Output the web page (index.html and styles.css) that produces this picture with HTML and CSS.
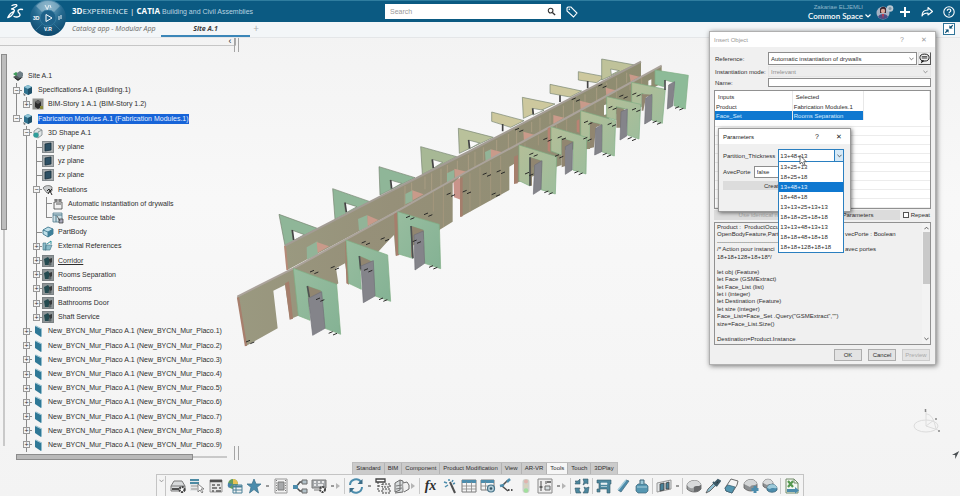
FILE: index.html
```html
<!DOCTYPE html>
<html lang="en">
<head>
<meta charset="utf-8">
<title>3DEXPERIENCE | CATIA</title>
<link rel="stylesheet" href="styles.css">
</head>
<body>
<svg class="defs" aria-hidden="true">
  <symbol id="i-site" viewBox="0 0 12 12"><path d="M1 7l5-3 5 3-5 4z" fill="#50575a"/><path d="M1 4l3-2 3 2-3 2z" fill="#3f9a5a"/><path d="M5 3l3-2 3 2v3L8 8 5 6z" fill="#6e7f87"/><path d="M3 8l3 2 3-2" stroke="#222" fill="none"/></symbol>
  <symbol id="i-prod" viewBox="0 0 12 12"><path d="M2 3l4-2 4 2v6l-4 2-4-2z" fill="#2f708c"/><path d="M2 3l4-2 4 2-4 2z" fill="#8fc3d6"/><path d="M6 5v6l4-2V3z" fill="#1f4f68"/><path d="M1 9l3 2-2 1z" fill="#6b7478"/></symbol>
  <symbol id="i-story" viewBox="0 0 12 12"><rect width="11" height="11" x=".5" y=".5" fill="#8e8f8c"/><path d="M3 4l3-2 3 2v5l-3 2-3-2z" fill="#2b2b2b"/><path d="M3 4l3-2 3 2-3 2z" fill="#5d5d5d"/><path d="M8 8h3v3H8z" fill="#8a8a3a"/></symbol>
  <symbol id="i-shape" viewBox="0 0 12 12"><path d="M2 4l4-3 4 2v5l-4 3-4-2z" fill="#dfe5e6" stroke="#7a8488" stroke-width=".8"/><path d="M6 5l4-2M6 5v5" stroke="#7a8488" stroke-width=".8"/><circle cx="4" cy="8" r="2.600" fill="#2f9d9a"/></symbol>
  <symbol id="i-plane" viewBox="0 0 12 12"><rect x=".5" y=".5" width="11" height="11" fill="#a9aeb0" stroke="#858b8e"/><path d="M3 3l6-1v7l-6 1z" fill="#2d5064" stroke="#17303e" stroke-width=".8"/></symbol>
  <symbol id="i-rel" viewBox="0 0 12 12"><path d="M1 4c2-3 7-3 9-1v4l-5 2z" fill="#c9cccd" stroke="#555" stroke-width=".7"/><path d="M5 7l2-2 1 2 2-2M6 10l2-3 2 4" stroke="#222" fill="none"/></symbol>
  <symbol id="i-act" viewBox="0 0 12 12"><path d="M2 4h8v7H2z" fill="#f1f1f1" stroke="#444" stroke-width=".8"/><path d="M2 2h8M4 1v3M8 1v3M4 6h5" stroke="#444" stroke-width=".9"/></symbol>
  <symbol id="i-res" viewBox="0 0 12 12"><path d="M1 1h9v9H1z" fill="#cfe0e6" stroke="#4e7a8c" stroke-width=".8"/><path d="M1 3h9M4 3v7" stroke="#4e7a8c"/><path d="M5 4l3 5M7 7h4v4H7z" fill="#aab" stroke="#333" stroke-width=".7"/></symbol>
  <symbol id="i-body" viewBox="0 0 12 12"><path d="M1 4l5-3 5 2v5l-5 3-5-3z" fill="#bfe0ea" stroke="#2d6b84" stroke-width=".8"/><path d="M1 4l5 2 5-3M6 6v5" stroke="#2d6b84" fill="none" stroke-width=".8"/><path d="M6 6l5-3v5l-5 3z" fill="#3d7f99"/></symbol>
  <symbol id="i-ext" viewBox="0 0 12 12"><path d="M1 3h3v7H1zM4 5h6l-2 5H3z" fill="#8bbcca" stroke="#4c7d8e" stroke-width=".7"/><path d="M5 4l4-3v3" fill="none" stroke="#2a8f9a"/></symbol>
  <symbol id="i-set" viewBox="0 0 12 12"><rect x=".5" y=".5" width="11" height="11" fill="#8f9698" stroke="#7b8184"/><path d="M2 4l4-2 2 3-1 5-4 0z" fill="#244a50"/><path d="M7 4l3-1v4l-2 2z" fill="#35383a"/><circle cx="8" cy="9" r="1.600" fill="#5c6466"/></symbol>
  <symbol id="i-panel" viewBox="0 0 12 12"><path d="M3 1l6 3v8L3 8z" fill="#2f7896"/><path d="M3 1l1-.6L10 3.500v8l-1 .5V4z" fill="#8fbccc"/></symbol>
</svg>

<header class="topbar">
  <svg class="logo" viewBox="0 0 18 18" aria-label="DS"><g fill="none" stroke="#fff" stroke-width="1.300" stroke-linecap="round" stroke-linejoin="round"><path d="M6 2.500c3-1.500 6-1 4.500.7C9.500 4.400 7 5.500 5.500 6c2.500 0 3.500.8 2.500 2.700C6.700 11.500 4 14 1.800 14.500 3 12 5 9.500 7.500 8.500"/><path d="M16.500 6.500c-2.500-.7-5 .3-4.500 2 .4 1.400 2.500 2 2 3.700-.5 1.600-3.500 2.300-6 1.300"/></g></svg>
  <button class="compass" aria-label="Compass">
    <svg viewBox="0 0 38 38"><defs><radialGradient id="cg" cx=".5" cy=".2" r=".9"><stop offset="0" stop-color="#7fb0ca"/><stop offset=".45" stop-color="#24698f"/><stop offset="1" stop-color="#073f63"/></radialGradient></defs><circle cx="19" cy="19" r="18" fill="url(#cg)"/><path d="M7 7a17 17 0 0 1 24 0l-6 6a9 9 0 0 0-12 0z" fill="#a5c6d6" opacity=".5"/><path d="M6 32l7-7M32 32l-7-7" stroke="#2c7297"/><circle cx="19" cy="19" r="8" fill="#1e628a" stroke="#3c83a6" stroke-width=".6"/><path d="M17 15.500l6 3.500-6 3.500z" fill="none" stroke="#fff"/><path d="M16 6l2 4M20 6l-2 5M21 6l1 3M30 17v4M32 16v4" stroke="#e4eef3" fill="none"/></svg>
    <span class="c-l">3D</span><span class="c-b">V.R</span>
  </button>
  <div class="brand"><b>3D</b>EXPERIENCE <i>|</i> <b>CATIA</b> <span>Building and Civil Assemblies</span></div>
  <form class="search"><input type="text" placeholder="Search" aria-label="Search"><button type="button" aria-label="Search"><svg viewBox="0 0 10 10"><circle cx="4" cy="4" r="2.600" fill="none" stroke="#333" stroke-width="1.200"/><path d="M6 6l3 3" stroke="#333" stroke-width="1.500"/></svg></button></form>
  <button class="tag" aria-label="Tags"><svg viewBox="0 0 12 12"><path d="M1 2l1-1h3l6 6-3.500 4L1 5z" fill="none" stroke="#fff" stroke-width="1.100"/><circle cx="3.300" cy="3.300" r=".8" fill="#fff"/></svg></button>
  <div class="account"><span>Zakariae ELJEMLI</span><button>Common Space <svg viewBox="0 0 6 4"><path d="M.5.5L3 3 5.500.5" fill="none" stroke="#fff" stroke-width="1.200"/></svg></button></div>
  <svg class="avatar" viewBox="0 0 18 16"><circle cx="7" cy="9" r="6.500" fill="#a6b3c4"/><path d="M4 5c1-3 6-3 6 0v4H4z" fill="#3a2630"/><circle cx="7" cy="7" r="2.200" fill="#d8a698"/><path d="M2 13c1-4 9-4 10 0-3 3-7 3-10 0z" fill="#4a4f86"/><path d="M6 10h2l-1 5z" fill="#c93b4e"/><circle cx="14" cy="4.500" r="3.300" fill="#b9c8d2"/><circle cx="14" cy="4.500" r="1.500" fill="#7e98a8"/></svg>
  <button class="hb" aria-label="Add"><svg viewBox="0 0 12 12"><path d="M6 1v10M1 6h10" stroke="#fff" stroke-width="2"/></svg></button>
  <button class="hb" aria-label="Share"><svg viewBox="0 0 12 12"><path d="M1 10c0-4 2-6 6-6V1.500L11.500 5.500 7 9V7C4 7 2 8 1 10z" fill="none" stroke="#fff" stroke-width="1.100" stroke-linejoin="round"/></svg></button>
  <button class="hb" aria-label="Help"><svg viewBox="0 0 12 12"><circle cx="6" cy="6" r="5.200" fill="none" stroke="#fff" stroke-width="1.100"/><path d="M4.300 4.700c0-2.300 3.500-2.200 3.500 0 0 1.200-1.800 1.200-1.800 2.600M6 8.300v1.200" fill="none" stroke="#fff" stroke-width="1.200"/></svg></button>
</header>

<nav class="tabs">
  <a href="#" class="tab">Catalog app - Modular App</a>
  <a href="#" class="tab on">Site A.1</a>
  <button aria-label="New tab">+</button>
</nav>

<main class="work">
  <svg class="scene" viewBox="0 0 1410 900" aria-label="Drywall assembly">
    <defs>
      <linearGradient id="wall" x1="0" x2="1"><stop offset="0" stop-color="#9a9980"/><stop offset=".3" stop-color="#969079"/><stop offset="1" stop-color="#8e8c70"/></linearGradient>
      <linearGradient id="gr" x1="0" x2="1" y2="1"><stop offset="0" stop-color="#98bd9f"/><stop offset="1" stop-color="#84b294"/></linearGradient>
      <linearGradient id="gl" x1="0" x2="1" y2="1"><stop offset="0" stop-color="#b4be98"/><stop offset="1" stop-color="#9dbd9c"/></linearGradient>
      <g id="mk" stroke="#2a2a28" stroke-width="3"><path d="M0 4l12-5M13 9l12-5"/></g>
    </defs>
    <g stroke="#75836f" stroke-width="2">
      <g fill="#8fb698"><path d="M147 493l115 42-97 52z"/><path d="M308 416l112 39-105 53z"/><path d="M447 350l108 33-105 52z"/></g>
      <path d="M572 290l108 30-103 53z" fill="#a7b895"/><path d="M685 235l105 27-102 48z" fill="#b9c19b"/>
      <g fill="#cdc89e"><path d="M785 186l97 26-40 20-57-18z"/><path d="M877 142l98 20-95 43z"/><path d="M960 103l95 20-35 18-60-11z"/><path d="M1045 65l80 15-25 18-55-8z"/><path d="M1115 27l100 18-100 45z" fill="#bfc29a"/></g>
      <g fill="#fafafa"><path d="M190 572l-5-32 38 14z"/><path d="M347 489l-4-31 38 12z"/><path d="M483 418l-3-28 35 10z"/><path d="M608 356l-2-28 32 9z"/><path d="M717 297l-2-27 34 9z"/><path d="M909 195l-2-20 35 6z"/><path d="M1144 74l-2-17 26 5z"/></g>
      <path d="M187 540l4 30M345 458l4 28M482 390l3 26M607 328l3 26M716 270l3 25M908 175l2 18M818 222v22M990 136v20M1073 93v22" stroke="#444" stroke-width="5"/>
    </g>
    <path d="M165 587L450 440 720 303 1233 35v52L172 660z" fill="url(#wall)"/>
    <path d="M165 587l7 73" stroke="#b58a77" stroke-width="6"/>
    <path d="M165 587L450 440 720 303 1233 35" fill="none" stroke="#a39c94" stroke-width="6"/>
    <path d="M525 408v62M545 398v63M585 380v38M605 370v60M633 356v52M652 345v50M682 332v30M715 315v45M735 305v52M760 292v40M800 270v32M835 252v55M860 240v50M905 216v30M930 203v42M960 188v35M1000 167v42M1030 151v38M1065 133v28M1100 114v40M1130 98v26M1160 83v34M1190 68v30" stroke="#b3a58a" stroke-width="2"/>
    <g fill="#92b498"><path d="M230 592l32-18 3 40-34 15zM384 507l28-12 3 35-28 12zM526 432l22-11v32l-22 10zM651 370l22-11v32l-22 10zM765 306l18-8v30l-16 8z"/></g>
    <g fill="#c99a8a"><path d="M260 576l37 13-34 19zM412 496l33 14-32 18zM547 421l34 12-33 18zM673 356l40 10-38 24zM782 298l35 9-34 24zM880 245l36 10-34 21zM970 195l32 8-32 19zM1050 152l36 9-34 19zM1127 113l30 8-28 17zM1198 73l30 7-26 15z"/></g>
    <path d="M670 385h24v65l-22-8z" fill="#c9938a"/>
    <path d="M22 740L190 655 495 487 720 360 965 228 1295 47V100L1250 125 1180 180 1080 240V297L995 300V345L980 350 868 395 858 400 855 340 838 350V420L693 500 690 380 668 400V515L628 540 497 617 492 555 468 580 355 703 345 640 318 655 325 700 205 797 180 808 165 705 130 722 143 835 48 888z" fill="url(#wall)"/>
    <path d="M22 740L190 655 495 487 720 360 965 228 1295 47" fill="none" stroke="#aba39b" stroke-width="6"/>
    <path d="M24 742l24 146" stroke="#a87f6d" stroke-width="7"/>
    <g fill="#a57e6c"><path d="M165 700l12-6 12 112-10 3z"/><path d="M345 575l8-3 4 132-8-4z"/><path d="M492 492l10-5 6 128-10 3z"/><path d="M690 385l8-4v118l-8 2z"/><path d="M852 320l12-5-1 85-11 2z"/></g>
    <g fill="#b98373"><path d="M953 235l8-4v75l-8-3zM1040 212l8-4v40l-8-3z"/></g>
    <path d="M720 370v115M750 352v116M782 335v116M812 318v118M640 408v123M610 425v60M885 280v20M925 256v30M980 224v16M1010 207v40M1065 178v20M1095 160v22M1125 143v12M1160 125v20M1200 101v20M1235 82v22" stroke="#aa9c80" stroke-width="2"/>
    <path d="M1122 166l8-3v30l-8 2zM1255 92l9-4v18l-9 1z" fill="#fafafa"/>
    <g stroke="#7fae83" stroke-width="2">
      <g fill="url(#gl)">
        <path d="M1275 60l100 16-9 101-34-10 2-69-29-8-4 20-26-8z" fill="#8dbb98"/>
        <path d="M1205 97l101 21-9 102-32-10 1-70-31-10v40l-30-8z"/>
        <path d="M1130 140l102 23-5 104-35-12v-77l-33-8v40l-29-8z"/>
        <path d="M1052 182l105 30-4 106-38-13 1-81-36-9v60l-28-10z"/>
        <path d="M963 230l107 32-2 110-40-12 2-85-35-10v50l-32-12z"/>
        <path d="M867 285l113 35-4 112-43-13 2-86-35-11v86l-33-16z"/>
      </g>
      <g fill="url(#gr)">
        <path d="M503 485l125 38 4 133-48-16-4-100-37-12 5 97-42-13z"/>
        <path d="M348 570l125 45 9 139-47-16-8-103-39-17 6 100-38-18z"/>
        <path d="M190 655l130 48 12 150-47-18-13-113-40-14 8 103-35-14z"/>
      </g>
    </g>
    <path d="M543 528l37 12v10l-30 12v62l-7-4zM388 618l39 17-1 10-32 5zM232 708l40 14 1 8-35 12zM900 322l35 11-1 8-28 12v54h-6zM995 265l35 10-10 8-14 7v58l-11 4zM1080 215l36 9-18 8-6 60-12 3zM1159 178l33 2-10 6-8 7v40h-15zM1235 132l31 2-18 8-8 40h-5z" fill="#918670"/>
    <path d="M232 708l6 34M388 618l4 40M543 528l6 97M900 322v85M1305 90v30" stroke="#4d5151" stroke-width="5"/>
    <g fill="#84848a" stroke="#6f7077" stroke-width="2"><path d="M235 745l40-20 10 110-37 21z"/><path d="M393 648l37-16 5 106-35 20z"/><path d="M552 555l28-12 4 97-29 20z"/><path d="M914 345l22-13-3 86-23 15z"/><path d="M1006 290l22-13-2 83-20 13z"/><path d="M1097 235l19-11-1 81-21 10z"/><path d="M1173 185l19-8-2 81-20 12z"/><path d="M1247 145l19-12-2 77-20 12z"/><path d="M1316 105l18-10-6 73-16 9z"/></g>
    <g><use href="#mk" x="48" y="872"/><use href="#mk" x="240" y="662"/><use href="#mk" x="302" y="650"/><use href="#mk" x="258" y="745"/><use href="#mk" x="296" y="846"/><use href="#mk" x="395" y="575"/><use href="#mk" x="452" y="564"/><use href="#mk" x="402" y="657"/><use href="#mk" x="447" y="745"/><use href="#mk" x="528" y="499"/><use href="#mk" x="582" y="490"/><use href="#mk" x="548" y="571"/><use href="#mk" x="597" y="648"/><use href="#mk" x="650" y="430"/><use href="#mk" x="698" y="422"/><use href="#mk" x="758" y="370"/><use href="#mk" x="800" y="362"/><use href="#mk" x="785" y="430"/><use href="#mk" x="898" y="310"/><use href="#mk" x="885" y="368"/><use href="#mk" x="943" y="424"/><use href="#mk" x="983" y="260"/><use href="#mk" x="975" y="315"/><use href="#mk" x="1033" y="365"/><use href="#mk" x="1062" y="214"/><use href="#mk" x="1060" y="263"/><use href="#mk" x="1118" y="311"/><use href="#mk" x="1135" y="170"/><use href="#mk" x="1133" y="220"/><use href="#mk" x="1193" y="263"/><use href="#mk" x="1207" y="130"/><use href="#mk" x="1206" y="176"/><use href="#mk" x="1268" y="214"/><use href="#mk" x="1335" y="171"/><use href="#mk" x="855" y="236"/><use href="#mk" x="1025" y="145"/><use href="#mk" x="1105" y="104"/><use href="#mk" x="1168" y="136"/><use href="#mk" x="940" y="265"/></g>
  </svg>

  <aside class="side">
    <div class="side-top"><button aria-label="Collapse panel">‹</button></div>
    <div class="side-mid">
      <div class="vbar"><i></i></div>
      <ul class="tree">
        <li><svg><use href="#i-site"/></svg><span>Site A.1</span></li>
        <li><i class="t"><button aria-label="Collapse">−</button></i><svg><use href="#i-prod"/></svg><span>Specifications A.1 (Building.1)</span></li>
        <li><i class="v"></i><i class="e"><button aria-label="Expand">+</button></i><svg><use href="#i-story"/></svg><span>BIM-Story 1 A.1 (BIM-Story 1.2)</span></li>
        <li><i class="e"><button aria-label="Collapse">−</button></i><svg><use href="#i-prod"/></svg><span class="sel">Fabrication Modules A.1 (Fabrication Modules.1)</span></li>
        <li><i></i><i class="t"><button aria-label="Collapse">−</button></i><svg><use href="#i-shape"/></svg><span>3D Shape A.1</span></li>
        <li><i></i><i class="v"></i><i class="t"></i><svg><use href="#i-plane"/></svg><span>xy plane</span></li>
        <li><i></i><i class="v"></i><i class="t"></i><svg><use href="#i-plane"/></svg><span>yz plane</span></li>
        <li><i></i><i class="v"></i><i class="t"></i><svg><use href="#i-plane"/></svg><span>zx plane</span></li>
        <li><i></i><i class="v"></i><i class="t"><button aria-label="Collapse">−</button></i><svg><use href="#i-rel"/></svg><span>Relations</span></li>
        <li><i></i><i class="v"></i><i class="v"></i><i class="t"></i><svg><use href="#i-act"/></svg><span>Automatic instantiation of drywalls</span></li>
        <li><i></i><i class="v"></i><i class="v"></i><i class="e"></i><svg><use href="#i-res"/></svg><span>Resource table</span></li>
        <li><i></i><i class="v"></i><i class="t"></i><svg><use href="#i-body"/></svg><span>PartBody</span></li>
        <li><i></i><i class="v"></i><i class="t"><button aria-label="Expand">+</button></i><svg><use href="#i-ext"/></svg><span>External References</span></li>
        <li><i></i><i class="v"></i><i class="t"><button aria-label="Expand">+</button></i><svg><use href="#i-set"/></svg><span><u>Corridor</u></span></li>
        <li><i></i><i class="v"></i><i class="t"><button aria-label="Expand">+</button></i><svg><use href="#i-set"/></svg><span>Rooms Separation</span></li>
        <li><i></i><i class="v"></i><i class="t"><button aria-label="Expand">+</button></i><svg><use href="#i-set"/></svg><span>Bathrooms</span></li>
        <li><i></i><i class="v"></i><i class="t"><button aria-label="Expand">+</button></i><svg><use href="#i-set"/></svg><span>Bathrooms Door</span></li>
        <li><i></i><i class="v"></i><i class="e"><button aria-label="Expand">+</button></i><svg><use href="#i-set"/></svg><span>Shaft Service</span></li>
        <li><i></i><i class="t"><button aria-label="Expand">+</button></i><svg><use href="#i-panel"/></svg><span>New_BYCN_Mur_Placo A.1 (New_BYCN_Mur_Placo.1)</span></li>
        <li><i></i><i class="t"><button aria-label="Expand">+</button></i><svg><use href="#i-panel"/></svg><span>New_BYCN_Mur_Placo A.1 (New_BYCN_Mur_Placo.2)</span></li>
        <li><i></i><i class="t"><button aria-label="Expand">+</button></i><svg><use href="#i-panel"/></svg><span>New_BYCN_Mur_Placo A.1 (New_BYCN_Mur_Placo.3)</span></li>
        <li><i></i><i class="t"><button aria-label="Expand">+</button></i><svg><use href="#i-panel"/></svg><span>New_BYCN_Mur_Placo A.1 (New_BYCN_Mur_Placo.4)</span></li>
        <li><i></i><i class="t"><button aria-label="Expand">+</button></i><svg><use href="#i-panel"/></svg><span>New_BYCN_Mur_Placo A.1 (New_BYCN_Mur_Placo.5)</span></li>
        <li><i></i><i class="t"><button aria-label="Expand">+</button></i><svg><use href="#i-panel"/></svg><span>New_BYCN_Mur_Placo A.1 (New_BYCN_Mur_Placo.6)</span></li>
        <li><i></i><i class="t"><button aria-label="Expand">+</button></i><svg><use href="#i-panel"/></svg><span>New_BYCN_Mur_Placo A.1 (New_BYCN_Mur_Placo.7)</span></li>
        <li><i></i><i class="t"><button aria-label="Expand">+</button></i><svg><use href="#i-panel"/></svg><span>New_BYCN_Mur_Placo A.1 (New_BYCN_Mur_Placo.8)</span></li>
        <li><i></i><i class="t"><button aria-label="Expand">+</button></i><svg><use href="#i-panel"/></svg><span>New_BYCN_Mur_Placo A.1 (New_BYCN_Mur_Placo.9)</span></li>
      </ul>
    </div>
    <div class="hbar"><i></i></div>
  </aside>

  <button class="restore" aria-label="Restore"><svg viewBox="0 0 12 12"><path d="M6.500 1.500v4h4zM5.500 10.500v-4h-4z" fill="#0b4f74"/><path d="M7 5l3.500-3.500M5 7L1.500 10.500" stroke="#0b4f74" stroke-width="1.400"/></svg></button>
  <svg class="axes" viewBox="0 0 30 28"><g fill="none" stroke="#dcdcdc"><ellipse cx="13" cy="18" rx="12" ry="6"/><path d="M13 18V3M13 18l12 4M13 18l8-6M13 6c5 0 8 5 10 15"/></g><path d="M12.500 1v3M23 10v2M26 22v2" stroke="#888" stroke-width="1.500"/></svg>
  <svg class="grip" viewBox="0 0 10 10"><path d="M9 0L0 5l4 0v5z" fill="#4a4f52"/></svg>

  <section class="dlg" aria-label="Insert Object">
    <div class="bar"><h2>Insert Object</h2><button aria-label="Help">?</button><button aria-label="Close">✕</button></div>
    <div class="fields">
      <label for="ref">Reference:</label><div class="pair"><select id="ref"><option>Automatic instantiation of drywalls</option></select><button class="bubble" aria-label="Comment"><svg viewBox="0 0 12 12"><ellipse cx="6" cy="5" rx="5" ry="3.800" fill="#eee" stroke="#111"/><path d="M3 8l-1 3.500L6 8.500" fill="#111"/><path d="M3 4h6M3 5.500h6" stroke="#222" stroke-width=".9"/></svg></button></div>
      <label for="mode">Instantiation mode:</label><select id="mode" disabled><option>Irrelevant</option></select>
      <label for="nm">Name:</label><input id="nm" type="text">
    </div>
    <div class="inputs">
      <table>
        <thead><tr><th>Inputs</th><th>Selected</th><th></th></tr></thead>
        <tbody>
          <tr><td>Product</td><td>Fabrication Modules.1</td><td></td></tr>
          <tr class="on"><td>Face_Set</td><td>Rooms Separation</td><td></td></tr>
        </tbody>
      </table>
    </div>
    <div class="acts"><button class="wide" disabled>Use identical name</button><button>Parameters</button><label><input type="checkbox">Repeat</label></div>
    <div class="code">
      <div class="lines">
        <p>Product :&nbsp; ProductOccu</p>
        <p class="two"><span>OpenBodyFeature,Part</span><span>vecPorte : Boolean</span></p>
        <p>--------------------------------</p>
        <p class="two"><span>/* Action pour instanci</span><span>avec portes</span></p>
        <p>18+18+128+18+18*/</p>
        <p></p>
        <p>let obj (Feature)</p>
        <p>let Face (GSMExtract)</p>
        <p>let Face_List (list)</p>
        <p>let i (integer)</p>
        <p>let Destination (Feature)</p>
        <p>let size (integer)</p>
        <p>Face_List=Face_Set .Query("GSMExtract","")</p>
        <p>size=Face_List.Size()</p>
        <p></p>
        <p>Destination=Product.Instance</p>
      </div>
      <div class="scroll"><svg viewBox="0 0 6 4"><path d="M.5 3.500L3 1l2.500 2.500" fill="none" stroke="#444"/></svg><i></i><svg viewBox="0 0 6 4"><path d="M.5.5L3 3 5.500.5" fill="none" stroke="#444"/></svg></div>
    </div>
    <div class="foot"><button>OK</button><button>Cancel</button><button disabled>Preview</button></div>

    <section class="params" aria-label="Parameters">
      <div class="bar"><h2>Parameters</h2><button aria-label="Help">?</button><button aria-label="Close">✕</button></div>
      <div class="prow"><label for="pt">Partition_Thickness</label><div class="combo"><input id="pt" type="text" value="13+48+13"><button aria-label="Open list"><svg viewBox="0 0 6 4"><path d="M.5.5L3 3 5.500.5" fill="none" stroke="#444"/></svg></button>
        <ul><li>13+25+13</li><li>18+25+18</li><li class="on">13+48+13</li><li>18+48+18</li><li>13+13+25+13+13</li><li>18+18+25+18+18</li><li>13+13+48+13+13</li><li>18+18+48+18+18</li><li>18+18+128+18+18</li></ul></div></div>
      <div class="prow"><label for="ap">AvecPorte</label><select id="ap"><option>false</option></select></div>
      <button class="create">Create</button>
      <svg class="cursor" viewBox="0 0 8 11"><path d="M1 .5v8.500l2-1.800L4.500 10.500l1.500-.7L4.700 6.700h2.600z" fill="#fff" stroke="#333" stroke-width=".7"/></svg>
    </section>
  </section>
</main>

<footer class="dock">
  <nav class="cats"><a href="#">Standard</a><a href="#">BIM</a><a href="#">Component</a><a href="#">Product Modification</a><a href="#">View</a><a href="#">AR-VR</a><a href="#" class="on">Tools</a><a href="#">Touch</a><a href="#">3DPlay</a></nav>
  <div class="tools">
    <button class="opt" aria-label="Options"><svg viewBox="0 0 6 4"><path d="M.5.5L3 3 5.500.5" fill="none" stroke="#777"/></svg></button>
    <button aria-label="Properties"><svg viewBox="0 0 16 16"><path d="M1 8l3-5h8l3 5v5H1z" fill="#d4d6d7" stroke="#666"/><path d="M1 8h14" stroke="#666"/><path d="M2 11h7" stroke="#333" stroke-width="2"/><circle cx="12" cy="11.500" r="2.500" fill="#fff" stroke="#222" stroke-width="2" stroke-dasharray="2 .8"/></svg></button>
    <button aria-label="Select"><svg viewBox="0 0 16 16"><path d="M1 1h9v12H1z" fill="#e4e7e8"/><path d="M1 2h9M1 5h9" stroke="#2f7896" stroke-width="2"/><path d="M2 8h7M2 11h6" stroke="#888"/><path d="M9 6v8l2-2 2 3 1-1-2-3h3z" fill="#fff" stroke="#555" stroke-width=".8"/></svg></button>
    <button aria-label="Grid"><svg viewBox="0 0 16 16"><path d="M2 2h12v12H2z" fill="#e5e5e5" stroke="#888"/><path d="M2 3h12" stroke="#333" stroke-width="2.500"/><path d="M4 7h3M9 7h3M4 10h5M11 10h2M4 13h2M8 13h5" stroke="#444" stroke-width="1.500"/></svg></button>
    <button aria-label="Chart"><svg viewBox="0 0 16 16"><circle cx="6" cy="6" r="5" fill="#4a8f44"/><path d="M6 6V1a5 5 0 0 1 5 5z" fill="#e4b93a"/><path d="M6 6L2 10a5 5 0 0 1-1-5z" fill="#2a6fa0"/><path d="M6 7h9v8H6z" fill="#f2f2f2" stroke="#2f6f88"/><path d="M6 8.500h9" stroke="#2f6f88" stroke-width="2"/><path d="M6 12h9M9 7v8" stroke="#2f6f88"/></svg></button>
    <button aria-label="Favorites"><svg viewBox="0 0 16 16"><path d="M8 1l2 5h5l-4 3.300L12.500 15 8 11.500 3.500 15 5 9.300 1 6h5z" fill="#2f7ba0" stroke="#22607e" stroke-width=".8"/></svg></button><s></s>
    <button aria-label="Film"><svg viewBox="0 0 16 16"><path d="M2 1h12v14H2z" fill="#f2f2f2" stroke="#888"/><path d="M5 4h6v8H5z" fill="#9a9d9f" stroke="#666"/><path d="M3.500 2v12M12.500 2v12" stroke="#666" stroke-dasharray="1 1.500"/></svg></button>
    <button aria-label="Links"><svg viewBox="0 0 16 16"><path d="M4 9l4-5h4M4 9l4 4h4" fill="none" stroke="#333" stroke-width="1.500"/><path d="M1 7h5v4H1z" fill="#2f7ba0"/><path d="M10 2h5v4h-5zM10 11h5v4h-5z" fill="#a8bac2" stroke="#555"/></svg></button>
    <button aria-label="Command settings"><svg viewBox="0 0 16 16"><path d="M1 2h14v8H1z" fill="#999da0" stroke="#666"/><path d="M3 4h2M7 4h2M11 4h2M3 7h2M7 7h5" stroke="#fff" stroke-width="1.300"/><path d="M3 12h5" stroke="#666"/><circle cx="11.500" cy="11.500" r="2.500" fill="#fff" stroke="#222" stroke-width="2" stroke-dasharray="2 .8"/></svg></button><s></s><s class="r"></s><hr>
    <button aria-label="Update"><svg viewBox="0 0 16 16"><path d="M2 7a6 6 0 0 1 11-3M14 9a6 6 0 0 1-11 3" fill="none" stroke="#2f7ba0" stroke-width="2"/><path d="M14.500 1v5H9.500zM1.500 15v-5h5z" fill="#1d5574"/></svg></button><s></s>
    <button aria-label="Tree"><svg viewBox="0 0 16 16"><path d="M1 1h9v3H1z" fill="#fff" stroke="#222" stroke-width="1.300"/><path d="M3 4v9h3M3 8h3" fill="none" stroke="#222" stroke-dasharray="2 1"/><path d="M7 6h8v3H7zM7 11h8v4H7z" fill="#e5e5e5" stroke="#222" stroke-dasharray="2 1"/></svg></button>
    <button aria-label="Box"><svg viewBox="0 0 16 16"><path d="M1 5l5-3v10l-5 2zM6 2l3 1v11l-8 1" fill="#d5d9db" stroke="#555"/><path d="M9 5l4-1 2 3v4l-5 3" fill="#f0f0f0" stroke="#555"/><path d="M2 8l6-1M2 11l6-1" stroke="#666"/></svg></button><s class="r"></s><hr>
    <button class="fx" aria-label="Formula">fx</button>
    <button aria-label="Wizard"><svg viewBox="0 0 16 16"><path d="M8 4l5 11" stroke="#333" stroke-width="2"/><path d="M7 1v2M2 4l3 1M11 2l-1 2M3 9l3-2M13 5l-2 1" stroke="#2f7ba0" stroke-width="1.500"/></svg></button>
    <button aria-label="Design table"><svg viewBox="0 0 16 16"><path d="M1 2h14v12H1z" fill="#f6f6f6" stroke="#666"/><path d="M1 3.500h14" stroke="#2f7ba0" stroke-width="3"/><path d="M1 8h14M1 11h14M5.500 4v10M10.500 4v10" stroke="#777" stroke-width=".8"/></svg></button>
    <button aria-label="Table view"><svg viewBox="0 0 16 16"><path d="M1 2h13v10H1z" fill="#f6f6f6" stroke="#666"/><path d="M1 3.500h13" stroke="#2f7ba0" stroke-width="3"/><path d="M1 8h13M5.500 4v8" stroke="#777" stroke-width=".8"/><circle cx="11" cy="10.500" r="3.500" fill="#a7c6d3" stroke="#2c5f78" stroke-width="1.200"/><circle cx="11" cy="10.500" r="1.300" fill="#16384a"/></svg></button>
    <button aria-label="Rule"><svg viewBox="0 0 16 16"><path d="M9 2L3 8l6 5" fill="none" stroke="#333" stroke-width="1.500"/><path d="M8 4l3-3M1 8l4-1" stroke="#2f7ba0" stroke-width="2.500"/><path d="M9 12h6" stroke="#333" stroke-dasharray="1.500 1.500" stroke-width="2"/></svg></button>
    <button aria-label="Check"><svg viewBox="0 0 16 16"><rect x="4.500" y="1" width="7" height="14" rx="3" fill="#c7ccc5"/><circle cx="8" cy="3.500" r="2" fill="#dca9a2"/><circle cx="8" cy="8" r="2" fill="#d3cdb2"/><circle cx="8" cy="12.500" r="2.200" fill="#93dc8f"/></svg></button>
    <button aria-label="Parameters panel"><svg viewBox="0 0 16 16"><path d="M1 1h14v14H1z" fill="#ececec" stroke="#777"/><path d="M4 3v10M9 3v3" stroke="#333"/><path d="M2.500 9h3M10 4h4" stroke="#333" stroke-width="1.500"/><path d="M8 8h5v4H8z" fill="#cfd8db" stroke="#555"/></svg></button><s></s><s class="r"></s><hr>
    <button aria-label="Cycle"><svg viewBox="0 0 16 16"><g fill="#2f7590" stroke="#173f52" stroke-width=".6"><path d="M1 3h3l2-2v5H1l1-2zM9 1h5v5l-2-1-3 2 1-3zM1 10h5l-1 2 2 3H2zM10 9l2 1 3-1-1 6H9l2-3z"/></g></svg></button><hr>
    <button aria-label="Clamp"><svg viewBox="0 0 16 16"><path d="M1 2h14v4h-1v9h-3v-4H4v3H1v-3h2V5H1z" fill="#2f7590" stroke="#173f52" stroke-width=".6"/><path d="M5 5h6v1.500H5zM5 8.500h6" fill="#e8f0f3" stroke="#e8f0f3" stroke-width=".6"/></svg></button>
    <button aria-label="Bar"><svg viewBox="0 0 16 16"><path d="M3 12l8-10 3 1-8 11z" fill="#2f7ba0" stroke="#1d4d64" stroke-width=".7"/><path d="M3 12l8-10" stroke="#9ccadb" stroke-width="1.300"/></svg></button>
    <button aria-label="Weight"><svg viewBox="0 0 16 16"><path d="M2 8l2-2h8l2 2v5l-2 2H4l-2-2z" fill="#3a86a6" stroke="#1d4d64" stroke-width=".7"/><path d="M6 6V2h4v4" fill="#8fc3d6" stroke="#1d4d64"/><path d="M3 9h10" stroke="#9ccadb"/></svg></button><hr>
    <button aria-label="Section"><svg viewBox="0 0 16 16"><path d="M1 5l14-3v9L1 14z" fill="#dfe3e5" stroke="#888"/><path d="M4 6l4-1v7l-4 1zM10 5l3-1v7l-3 0z" fill="#2b6d89" stroke="#222" stroke-width=".8"/></svg></button><s></s><hr>
    <button aria-label="Material"><svg viewBox="0 0 16 16"><path d="M1 7c2-6 13-6 14 0v4c-3 4-10 4-14 0z" fill="#8b8e90" stroke="#444" stroke-width=".8"/><path d="M1 7c2-6 13-6 14 0-3 2-5 0-8 3-2 1-5-1-6-3z" fill="#d4d6d7"/><path d="M8 9c2-2 5 0 7-2v4c-2 2-4 3-7 3z" fill="#505355"/></svg></button>
    <button aria-label="Pick"><svg viewBox="0 0 16 16"><path d="M1 15l2-4 6-6 2 2-6 6z" fill="#7db5cb" stroke="#333" stroke-width=".8"/><path d="M8 4l4 4M10 5l3-3 2 1-3 4z" stroke="#1d3e4e" stroke-width="2"/></svg></button>
    <button aria-label="Erase"><svg viewBox="0 0 16 16"><path d="M7 1l7 2-1 4-5 8-6-2-1-3z" fill="#f4f4f4" stroke="#555"/><path d="M4 7l7 2-3 6-6-2-1-3z" fill="#3786a5" stroke="#1d4d64" stroke-width=".8"/></svg></button>
    <button aria-label="Add material"><svg viewBox="0 0 16 16"><path d="M1 6c2-6 12-6 13 0v4c-3 4-9 4-13 0z" fill="#7b7e80" stroke="#444" stroke-width=".8"/><path d="M1 6c2-6 12-6 13 0-3 2-5 0-7 3z" fill="#cfd1d2"/><path d="M12 8v7M8.500 11.500h7" stroke="#2f7ba0" stroke-width="3"/></svg></button>
    <button aria-label="Copy material"><svg viewBox="0 0 16 16"><path d="M1 5c1-5 9-5 10 0v3c-2 3-8 3-10 0z" fill="#7b7e80" stroke="#444" stroke-width=".8"/><path d="M1 5c1-5 9-5 10 0-2 2-4 0-6 2z" fill="#d4d6d7"/><path d="M5 10c1-5 9-5 10 0v2c-2 3-8 3-10 0z" fill="#2f7ba0" stroke="#1d4d64" stroke-width=".8"/><path d="M5 10c1-5 9-5 10 0-3 1-5-1-7 1z" fill="#8fc3d6"/></svg></button><hr>
    <button aria-label="Export"><svg viewBox="0 0 16 16"><path d="M2 1h8l4 4v10H2z" fill="#f4f8f2" stroke="#5c7a52"/><path d="M4 3l5 6M9 3L4 9" stroke="#3c8a35" stroke-width="2.200"/><path d="M3 11h8V9l4 3.500-4 3V14H3z" fill="#2f7ba0"/><path d="M10 1v4h4" fill="none" stroke="#5c7a52"/></svg></button>
  </div>
</footer>
</body>
</html>
```
FILE: styles.css
```css
* { box-sizing: border-box; }
html, body { height: 100%; }
body {
  margin: 0;
  display: flex;
  flex-direction: column;
  overflow: hidden;
  background: linear-gradient(#f2f2f2, #f8f8f8 40%, #f3f3f3);
  font: 7px/10px "Liberation Sans", sans-serif;
  color: #2e2e2e;
}
button, input, select { font: inherit; color: inherit; margin: 0; padding: 0; border: 0; background: none; border-radius: 0; min-width: 0; }
select { appearance: none; }
button { display: flex; align-items: center; justify-content: center; }
a { color: inherit; text-decoration: none; }
ul { list-style: none; margin: 0; padding: 0; }
p, h2 { margin: 0; font-size: inherit; font-weight: inherit; }
svg { display: block; flex: none; }
.defs { position: absolute; width: 0; height: 0; }

/* top bar */
.topbar {
  display: flex;
  align-items: center;
  height: 22px;
  flex: none;
  padding-left: 6px;
  background: #0b5a82;
  border-top: 1px solid #2f7d9f;
  color: #fff;
  position: relative;
  z-index: 3;
}
.logo { width: 18px; height: 18px; }
.compass { position: relative; width: 38px; height: 38px; margin: -2px 5px 0; align-self: flex-start; }
.compass svg { width: 38px; height: 38px; }
.compass span { position: absolute; font-size: 5px; font-weight: 700; line-height: 6px; }
.c-l { left: 4px; top: 16px; }
.c-b { left: 15px; top: 27px; }
.brand { font: 8px/12px "Open Sans", sans-serif; flex: 1; margin-right: 20px; white-space: nowrap; color: #e3eef4; }
.brand b, .brand i { color: #fff; font-style: normal; }
.brand span { font: 7px/12px "Liberation Sans", sans-serif; color: #b9d3e0; }
.search { display: flex; width: 176px; height: 15px; background: #fff; padding: 0 5px; margin: 0; }
.search input { flex: 1; outline: 0; }
.search input::placeholder { color: #999; opacity: 1; }
.search svg { width: 9px; height: 9px; }
.tag { margin-left: 5px; }
.tag svg { width: 12px; height: 12px; }
.account { flex: 1; display: flex; flex-direction: column; align-items: flex-end; font-size: 6px; line-height: 8px; color: #8fb6ca; }
.account span { padding-right: 8px; }
.account button { font: 600 8px/10px "Lato", sans-serif; color: #fff; gap: 2px; }
.account svg { width: 6px; height: 4px; }
.avatar { width: 18px; height: 16px; margin-left: 5px; }
.hb { width: 22px; }
.hb svg { width: 12px; height: 12px; }

/* document tabs */
.tabs { display: flex; align-items: center; height: 16px; flex: none; padding-left: 72px; background: #f3f6f8; border-bottom: 1px solid #e4e6e8; font: italic 7px/14px "Open Sans", sans-serif; color: #666; }
.tab { width: 89px; height: 15px; white-space: nowrap; }
.tab.on { text-align: center; font-weight: 700; color: #3c3c3c; border-bottom: 2px solid #3b86b8; }
.tabs button { font: 10px/10px "Open Sans", sans-serif; color: #aaa; width: 12px; height: 14px; align-items: flex-start; }

/* work area */
.work { flex: 1; min-height: 0; position: relative; display: flex; }
.scene { position: absolute; left: 230px; top: 12px; width: 470px; height: 300px; }
.side { width: 239px; display: flex; flex-direction: column; position: relative; }
.side-top { height: 8px; border-bottom: 1px solid #c6c6c6; margin-right: 3px; display: flex; justify-content: flex-end; }
.side-top button { width: 11px; font-size: 9px; line-height: 7px; border-right: 1px solid #aaa; }
.side-mid { flex: 1; min-height: 0; display: flex; }
.vbar { width: 5px; margin: 8px 6px 8px 1px; display: flex; background: linear-gradient(#c9c9c9, #c9c9c9) 2px 0 / 2px 100% no-repeat; }
.vbar i { flex: none; width: 6px; height: 45%; background: #bdbdbd; border: 1px solid #8c8c8c; }
.tree { flex: 1; display: flex; flex-direction: column; padding: 23px 0 2px; }
.tree li { flex: 1; min-height: 0; display: flex; align-items: center; }
.tree li > svg { width: 12px; height: 12px; margin-right: 4px; }
.tree li > span { white-space: nowrap; line-height: 10px; }
.tree .sel { background: #1764d8; color: #e8f0ff; }
.tree i { width: 10px; flex: none; align-self: stretch; display: flex; align-items: center; justify-content: center; }
.tree .v { background: linear-gradient(#8a8a8a, #8a8a8a) 4px 0 / 1px 100% no-repeat; }
.tree .t { background: linear-gradient(#8a8a8a, #8a8a8a) 4px 0 / 1px 100% no-repeat, linear-gradient(#8a8a8a, #8a8a8a) 4px 50% / 6px 1px no-repeat; }
.tree .e { background: linear-gradient(#8a8a8a, #8a8a8a) 4px 0 / 1px 50% no-repeat, linear-gradient(#8a8a8a, #8a8a8a) 4px 50% / 6px 1px no-repeat; }
.tree button { width: 7px; height: 7px; margin-right: 1px; border: 1px solid #999; background: #f4f4f4; font: 7px/5px "Liberation Sans", sans-serif; }
.hbar { height: 6px; margin: 0 12px 0 16px; display: flex; align-items: center; background: linear-gradient(#c9c9c9, #c9c9c9) 0 50% / 100% 2px no-repeat; }
.hbar i { width: 84%; height: 6px; background: #b9b9b9; border: 1px solid #8c8c8c; }
.side::before, .side::after { content: ""; position: absolute; right: 0; width: 3px; height: 14px; border: 1px solid #a5a5a5; border-width: 0 1px; }
.side::before { top: 0; }
.side::after { bottom: 0; }
.restore { position: absolute; right: 5px; top: -15px; width: 12px; height: 12px; background: #fff; border: 1px solid #2f7599; }
.restore svg { width: 10px; height: 10px; }
.axes { position: absolute; right: 17px; bottom: 24px; width: 30px; height: 28px; }
.grip { position: absolute; right: 0; bottom: 0; width: 8px; height: 10px; }

/* dialogs */
.dlg {
  position: absolute;
  right: 24px;
  top: -7px;
  width: 227px;
  background: #f0f0f0;
  border: 1px solid #b0b0b0;
  box-shadow: 1px 1px 5px #0008;
  font-size: 6px;
  line-height: 8px;
  z-index: 2;
}
.bar { display: flex; align-items: center; height: 15px; background: #fff; padding-left: 4px; color: #999; }
.bar h2 { flex: 1; }
.bar button { width: 22px; font-size: 7px; }
.fields { display: grid; grid-template-columns: 53px 1fr; grid-template-rows: 13px 11px 9px; row-gap: 1px; align-items: center; padding: 5px 4px 3px 5px; }
.fields label { white-space: nowrap; }
.fields input, .fields select { width: 100%; height: 100%; background: #fff; border: 1px solid #8d8d8d; padding-left: 2px; align-self: stretch; }
.fields select, .params select { background: #fff url("data:image/svg+xml,%3Csvg xmlns='http://www.w3.org/2000/svg' viewBox='0 0 6 4'%3E%3Cpath d='M.5.5L3 3 5.500.5' fill='none' stroke='%23666'/%3E%3C/svg%3E") right 2px center / 5px 4px no-repeat; }
.fields select:disabled { background-color: #ededed; border-color: #e2e2e2; color: #777; opacity: .8; }
.pair { display: flex; gap: 1px; align-self: stretch; }
.bubble { width: 14px; border: 1px solid; border-color: #ddd #555 #555 #ddd; }
.bubble svg { width: 11px; height: 11px; }
.inputs { margin: 0 4px; height: 119px; border: 1px solid #919191; background: repeating-linear-gradient(#fff 0 8px, #ececec 8px 9px); }
table { width: 100%; border-collapse: collapse; table-layout: fixed; background: #fff; }
th, td { padding: 0 1px; font-weight: 400; text-align: left; height: 9px; line-height: 8px; white-space: nowrap; border-right: 1px solid #e8e8e8; }
th { height: 11px; padding-left: 3px; }
th:nth-child(1) { width: 36%; }
th:nth-child(2) { width: 33%; }
tr.on td { background: #0f78d0; color: #d9ecff; }
tr.on td:last-child { background: #fff; }
.acts { display: flex; align-items: center; gap: 2px; margin: 1px 4px; height: 10px; }
.acts > button { flex: 5; height: 10px; background: #dcdcdc; }
.acts > .wide { flex: 6; }
.acts > button:disabled { color: #aaa; }
.acts label { display: flex; align-items: center; gap: 2px; padding: 0 1px; }
.acts input { appearance: none; width: 6px; height: 6px; border: 1px solid #555; background: #fff; }
.code { display: flex; height: 123px; margin: 2px 4px 0; border: 1px solid #919191; }
.lines { flex: 1; display: flex; flex-direction: column; padding: 0 0 2px 2px; min-width: 0; }
.lines p { flex: 1; min-height: 0; white-space: nowrap; }
.lines .two { display: flex; }
.two span:first-child { width: 128px; }
.scroll { width: 8px; display: flex; flex-direction: column; align-items: center; background: #f3f3f3; padding: 3px 0; }
.scroll i { width: 7px; height: 52px; margin-top: 2px; background: #c9c9c9; }
.scroll svg { width: 5px; height: 4px; }
.scroll svg:last-child { margin-top: auto; }
.foot { display: flex; justify-content: flex-end; gap: 6px; padding: 4px 5px 3px; }
.foot button { width: 28px; height: 12px; border: 1px solid #adadad; background: #e3e3e3; }
.foot button:disabled { color: #aaa; border-color: #ccc; }
.params { position: absolute; left: 8px; top: 96px; width: 133px; height: 84px; background: #f0f0f0; border: 1px solid #999; box-shadow: 1px 1px 4px #0008; }
.params .bar { color: #222; margin-bottom: 5px; }
.prow { display: flex; align-items: center; gap: 3px; height: 13px; margin: 0 6px 3px 4px; white-space: nowrap; }
.prow label { flex: none; }
.combo { position: relative; flex: 1; display: flex; height: 13px; border: 1px solid #2a7fc0; background: #fff; }
.combo input { flex: 1; padding-left: 1px; width: 10px; outline: 0; }
.combo button { width: 9px; background: #d5e9f7; border-left: 1px solid #2a7fc0; }
.combo button svg { width: 5px; height: 4px; }
.combo ul { position: absolute; left: -1px; right: -1px; top: 11px; background: #fff; border: 1px solid #2a7fc0; z-index: 2; }
.combo li { height: 10px; line-height: 10px; padding-left: 1px; }
.combo li.on { background: #0f78d0; color: #e5f2ff; }
.prow select { flex: 1; height: 12px; border: 1px solid #8d8d8d; padding-left: 2px; }
.create { width: 120px; height: 9px; margin-left: 4px; background: #dcdcdc; padding-right: 20px; }
.cursor { position: absolute; left: 80px; top: 26px; width: 8px; height: 11px; z-index: 3; }

/* dock */
.dock { flex: none; display: flex; flex-direction: column; align-items: center; margin-top: 2px; }
.cats { display: flex; margin-left: 10px; background: #cbcbcb; font-size: 6px; line-height: 11px; border: 1px solid #bdbdbd; border-bottom: 0; }
.cats a { padding: 0 3px; border-right: 1px solid #b3b3b3; }
.cats a:last-child { border-right: 0; }
.cats .on { background: #f6f6f6; }
.tools { display: flex; align-items: center; height: 22px; padding-right: 2px; border: 1px solid #c4c4c4; border-bottom: 0; background: #f4f4f4; }
.tools button { width: 19px; height: 20px; }
.tools svg { width: 16px; height: 16px; opacity: .85; }
.tools .opt { width: 9px; align-items: flex-start; padding-top: 3px; border-right: 1px solid #c4c4c4; margin-right: 2px; }
.tools .opt svg { width: 5px; height: 4px; }
.tools s { width: 8px; height: 3px; background: linear-gradient(#999, #999) center / 3px 2px no-repeat; }
.tools s.r { height: 6px; width: 7px; background: none; border-left: 4px solid #b5b5b5; border-top: 3px solid transparent; border-bottom: 3px solid transparent; }
.tools hr { width: 1px; height: 16px; margin: 0 1px; border: 0; background: #c9c9c9; }
.tools .fx { font: italic 700 14px/16px "Liberation Serif", serif; }
```
